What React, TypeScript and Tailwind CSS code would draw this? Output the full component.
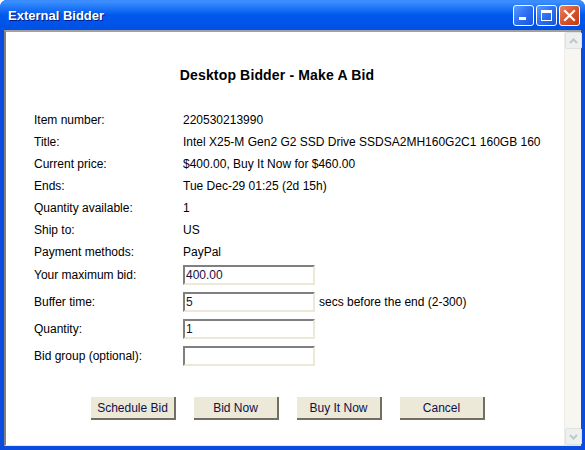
import React from "react";

const font = { fontFamily: '"Liberation Sans", Arial, sans-serif' };

function TitleButton({ kind }: { kind: "min" | "max" | "close" }) {
  const base =
    "w-[21px] h-[21px] rounded-[3px] border border-white flex items-center justify-center relative";
  if (kind === "close") {
    return (
      <div className={base + " bg-gradient-to-br from-[#E8835E] via-[#D9532B] to-[#C23A10]"}>
        <svg width="13" height="13" viewBox="0 0 13 13">
          <path d="M2 2 L11 11 M11 2 L2 11" stroke="white" strokeWidth="2.2" strokeLinecap="square" />
        </svg>
      </div>
    );
  }
  return (
    <div className={base + " bg-gradient-to-br from-[#5B9BFF] via-[#2D6FF0] to-[#1A55E0]"}>
      {kind === "min" ? (
        <div className="absolute left-[5px] bottom-[5px] w-[7px] h-[3px] bg-white" />
      ) : (
        <div className="w-[11px] h-[11px] border border-white border-t-[3px]" />
      )}
    </div>
  );
}

function ScrollArrow({ up }: { up: boolean }) {
  return (
    <div className="w-[17px] h-[17px] bg-[#EEF0F0] border border-[#DDE3E3] rounded-[2px] flex items-center justify-center">
      <svg width="9" height="6" viewBox="0 0 9 6">
        <path
          d={up ? "M1 5 L4.5 1.5 L8 5" : "M1 1 L4.5 4.5 L8 1"}
          stroke="#B7CBCB"
          strokeWidth="2"
          fill="none"
        />
      </svg>
    </div>
  );
}

function Input({ value }: { value: string }) {
  return (
    <div className="w-[132px] h-[20px] bg-white border-2 border-t-[#7F7F7F] border-l-[#7F7F7F] border-b-[#ECE9D8] border-r-[#ECE9D8] flex items-center pl-[1px] text-[12px] text-[#1a1040]">
      {value}
    </div>
  );
}

function Btn({ label }: { label: string }) {
  return (
    <div className="w-[85px] h-[23px] bg-[#ECE9D8] border-r-2 border-b-2 border-r-[#716F64] border-b-[#716F64] flex items-center justify-center text-[12px] text-[#10104A]">
      {label}
    </div>
  );
}

const rows: [string, string][] = [
  ["Item number:", "220530213990"],
  ["Title:", "Intel X25-M Gen2 G2 SSD Drive SSDSA2MH160G2C1 160GB 160"],
  ["Current price:", "$400.00, Buy It Now for $460.00"],
  ["Ends:", "Tue Dec-29 01:25 (2d 15h)"],
  ["Quantity available:", "1"],
  ["Ship to:", "US"],
  ["Payment methods:", "PayPal"],
];

const inputs: [string, string, string?][] = [
  ["Your maximum bid:", "400.00"],
  ["Buffer time:", "5", "secs before the end (2-300)"],
  ["Quantity:", "1"],
  ["Bid group (optional):", ""],
];

export default function App() {
  return (
    <div
      className="w-[585px] h-[450px] bg-[#0A4CDE] flex flex-col overflow-hidden rounded-t-[7px]"
      style={font}
    >
      <div className="h-[30px] shrink-0 bg-gradient-to-b from-[#3D95FF] via-[#0058EE] to-[#0050E4] flex items-center pl-[8px] pr-[5px] pt-[2px] relative">
        <div className="absolute left-0 right-0 top-0 h-[3px] bg-[#3A8CFF] rounded-t-[7px]" />
        <div
          className="text-white font-bold text-[13px] relative"
          style={{ textShadow: "1px 1px #0A1883" }}
        >
          External Bidder
        </div>
        <div className="ml-auto flex gap-[2px] relative -mt-[2px]">
          <TitleButton kind="min" />
          <TitleButton kind="max" />
          <TitleButton kind="close" />
        </div>
      </div>
      <div className="flex-1 mx-[4px] mb-[4px] flex border-t-2 border-l-2 border-t-[#A0A0A0] border-l-[#808080] border-b border-b-[#ECE9D8] bg-white">
        <div className="flex-1 text-[12px] text-black pl-[28px] pt-[36px]">
          <div className="w-[486px] text-center font-bold text-[14px] tracking-[0.15px] h-[14px] leading-[14px]">
            Desktop Bidder - Make A Bid
          </div>
          <div className="mt-[27px] flex flex-col">
            {rows.map(([l, v]) => (
              <div key={l} className="h-[22px] flex items-center whitespace-nowrap">
                <div className="w-[149px] shrink-0">{l}</div>
                <div>{v}</div>
              </div>
            ))}
          </div>
          <div className="mt-[2px] flex flex-col gap-[7px]">
            {inputs.map(([l, v, s]) => (
              <div key={l} className="h-[20px] flex items-center whitespace-nowrap">
                <div className="w-[149px] shrink-0">{l}</div>
                <Input value={v} />
                {s && <div className="ml-[4px]">{s}</div>}
              </div>
            ))}
          </div>
          <div className="mt-[31px] ml-[57px] flex gap-[18px]">
            <Btn label="Schedule Bid" />
            <Btn label="Bid Now" />
            <Btn label="Buy It Now" />
            <Btn label="Cancel" />
          </div>
        </div>
        <div className="w-[17px] shrink-0 bg-[#F7F6F1] border-l border-l-[#EDEBE3] flex flex-col justify-between">
          <ScrollArrow up />
          <ScrollArrow up={false} />
        </div>
      </div>
    </div>
  );
}
